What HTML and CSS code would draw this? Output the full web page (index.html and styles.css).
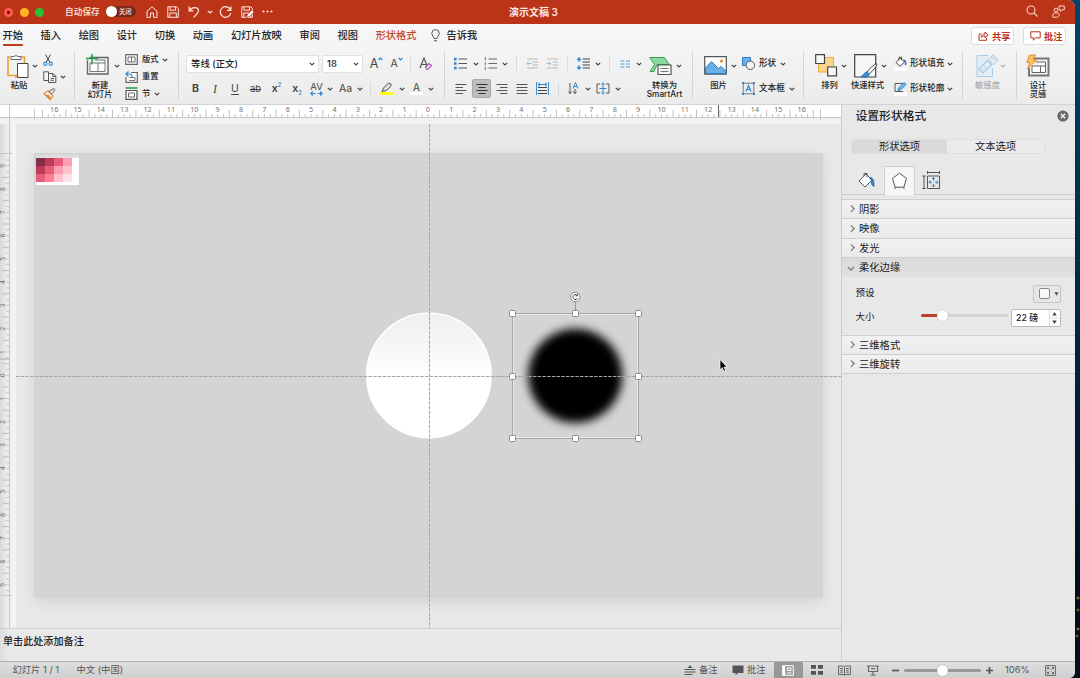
FILE: index.html
```html
<!DOCTYPE html>

<html>
	<head>
		<meta http-equiv="content-type" content="text/html; charset=utf-8" />
		<title>演示文稿 3</title>
		<link rel="stylesheet" href="styles.css">
	</head>

	<body>
		<svg class="defs">
			<symbol id="chev" viewBox="0 0 6 4"><path d="M.8.8 3 3 5.200.8" fill="none" stroke="#444" stroke-width="1.2"/></symbol>
			<symbol id="save" viewBox="0 0 12 12"><path d="M.8.8h9l1.500 1.500v9H.8zM3 .8v3.400h5.500V.8M2.800 11.200V7h6.500v4.200" fill="none" stroke="#fbe6e0"/></symbol>
		</svg>

		<div class="window">
			<div class="titlebar">
				<div class="lights">
					<i class="light red"></i><i class="light yellow"></i><i class="light green"></i>
				</div>
				<span class="autosave">自动保存</span>
				<div class="toggle"><i></i><span>关闭</span></div>
				<div class="quick">
					<svg width="12" height="12" fill="none" stroke="#fbe6e0"><path d="M1 5.300 6 .8l5 4.500v6H7.500V7h-3v4.300H1z"/></svg>
					<svg width="12" height="12"><use href="#save"/></svg>
					<svg width="12" height="12" fill="none" stroke="#fbe6e0" stroke-width="1.200"><path d="M1.200.6v4.200h4.200M1.400 4.600C4 .6 10.500.8 10.500 4.800c0 2.600-3 4-4.800 6.700"/></svg>
					<svg width="6" height="4" fill="none" stroke="#fbe6e0" stroke-width="1.200"><path d="M.8.8 3 3 5.200.8"/></svg>
					<svg width="13" height="12" fill="none" stroke="#fbe6e0" stroke-width="1.200"><path d="M11.600 4.200A5.300 5.300 0 1 0 11.800 7M11.900.5v3.900H8"/></svg>
					<svg width="13" height="12"><use href="#save" width="12"/><path d="M5.500 11.500 6.500 8.500l4.500-4.500 2 2-4.500 4.500z" fill="#fff" stroke="#bc3418" stroke-width=".6"/></svg>
					<svg width="11" height="3" fill="#fbe6e0"><circle cx="1.500" cy="1.500" r="1.100"/><circle cx="5.500" cy="1.500" r="1.100"/><circle cx="9.500" cy="1.500" r="1.100"/></svg>
				</div>
				<div class="doc-title">演示文稿 3</div>
				<div class="title-right">
					<svg width="12" height="12" fill="none" stroke="#f6d5cc" stroke-width="1.100"><circle cx="5" cy="5" r="4"/><path d="m8 8 3.500 3.500"/></svg>
					<svg width="13" height="13" fill="none" stroke="#f6d5cc"><circle cx="4" cy="5" r="1.900"/><path d="M.8 12.200V10c0-1.300.8-2 2-2h2.500c1.200 0 2 .7 2 2 0 1.500-1.500 2.200-3 2.200zM7 1h5.300v3.800H10L8.500 6.300V4.800H7z"/></svg>
				</div>
			</div>

			<div class="tabs">
				<span class="tab active">开始</span>
				<span class="tab">插入</span>
				<span class="tab">绘图</span>
				<span class="tab">设计</span>
				<span class="tab">切换</span>
				<span class="tab">动画</span>
				<span class="tab">幻灯片放映</span>
				<span class="tab">审阅</span>
				<span class="tab">视图</span>
				<span class="tab context">形状格式</span>
				<span class="tab tell">
					<svg width="9" height="13" fill="none" stroke="#555"><path d="M3 9.500C3 7.500.8 7 .8 4.300a3.700 3.700 0 0 1 7.400 0C8.200 7 6 7.500 6 9.500zM3 11.800h3"/></svg>
					告诉我
				</span>
				<div class="tab-buttons">
					<button class="outlined">
						<svg width="11" height="10" fill="none" stroke="#bc3418"><path d="M3.500 3H1v6.300h7.500V7M3 6.500c.3-2.500 2-3.400 4-3.400V1l3.200 3L7 6.800V5C5.500 5 4 5.200 3 6.500z"/></svg>
						共享
					</button>
					<button class="outlined">
						<svg width="11" height="10" fill="none" stroke="#bc3418"><path d="M.8.8h9.400v6H5.500L3.300 9.200V6.800H.8z"/></svg>
						批注
					</button>
				</div>
			</div>

			<div class="ribbon">
				<!-- Clipboard -->
				<div class="group clipboard">
					<div class="big">
						<svg width="22" height="24"><path d="M3 3H1v18.500h8V24M13 3h4.500v6" fill="none" stroke="#e8a33d" stroke-width="1.700"/><path d="M4 5.500v-3h3a2.500 2 0 0 1 4 0h3v3z" fill="#fff" stroke="#666"/><path d="M10.500 9.500h10.500v14H10.500z" fill="#fff" stroke="#444"/></svg>
						<span>粘贴</span>
					</div>
					<svg class="chev drop"><use href="#chev"/></svg>
					<div class="stack">
						<div><svg width="10" height="12" fill="none"><path d="m2.500.5 4.500 8M7.500.5 3 8.500" stroke="#444"/><circle cx="2.300" cy="9.800" r="1.600" stroke="#3a8fd0" stroke-width="1.200"/><circle cx="7.700" cy="9.800" r="1.600" stroke="#3a8fd0" stroke-width="1.200"/></svg></div>
						<div><svg width="14" height="12" fill="#f6f6f6" stroke="#555"><path d="M.8.8h4.700v8.700H.8z"/><path d="M5.500 2.500h4.500l2.800 2.800v6.200H5.500zM9.800 2.500v3h3M7.500 7.500h3.500M7.500 9.300h3.500"/></svg><svg class="chev"><use href="#chev"/></svg></div>
						<div><svg width="13" height="12"><path d="m5 3 5 5-3 3.500L1 5.500z" fill="#fff" stroke="#e08a35" stroke-width="1.200"/><path d="M3 7.500 6.500 11 8 9.500 5 6z" fill="#e08a35"/><path d="m6 3.500 2-1.500 3-1.500 1 1-2 3-1.500 1.500z" fill="#eee" stroke="#555" stroke-width=".9"/></svg></div>
					</div>
				</div>

				<!-- Slides -->
				<div class="group slides">
					<div class="big">
						<svg width="24" height="24"><path d="M3.500 3.500h18.500v16.500H1.500V6" fill="#f6f6f6" stroke="#666" stroke-width="1.400"/><path d="M4 9h15v8.500H4zM12 9v8.500M9 6h10v3" fill="#fff" stroke="#777"/><path d="M0 4.500h12M6 0v10.500" stroke="#21a04b" stroke-width="1.500"/></svg>
						<span>新建<br>幻灯片</span>
					</div>
					<svg class="chev drop"><use href="#chev"/></svg>
					<div class="stack">
						<div><svg width="13" height="11" fill="#fff" stroke="#666"><path d="M.7.7h11.600v9.600H.7z" stroke-width="1.200"/><path d="M3 3h3.500v5H3zM6.500 3H10v5H6.500z"/></svg><span>版式</span><svg class="chev"><use href="#chev"/></svg></div>
						<div><svg width="13" height="12"><path d="M6 1.500h6.300v9.800H1V6" fill="#fff" stroke="#666" stroke-width="1.200"/><path d="M4.500 6.500H10v3H4" fill="none" stroke="#777"/><path d="M3.500.5 1 3l2.500 2.500M1 3h3.500c1.800 0 2.500 1.200 2.500 3.500" fill="none" stroke="#2f86cc" stroke-width="1.100"/></svg><span>重置</span></div>
						<div><svg width="13" height="13" fill="#fff"><path d="M.5 1h12" stroke="#3fa861" stroke-width="1.800"/><path d="M1 3.500h11v8.800H1z" stroke="#555" stroke-width="1.200"/><path d="M3.500 6h6v4h-6z" stroke="#666"/></svg><span>节</span><svg class="chev"><use href="#chev"/></svg></div>
					</div>
				</div>

				<!-- Font -->
				<div class="group font">
					<div class="row row-1">
						<div class="combo">等线 (正文)<svg class="chev"><use href="#chev"/></svg></div>
						<div class="combo size">18<svg class="chev"><use href="#chev"/></svg></div>
						<span class="glyph grow">A<svg width="5" height="4"><path d="M.6 3 2.500 1 4.400 3" fill="none" stroke="#2f86cc" stroke-width="1.200"/></svg></span>
						<span class="glyph shrink">A<svg width="5" height="4"><path d="M.6 1 2.500 3 4.400 1" fill="none" stroke="#2f86cc" stroke-width="1.200"/></svg></span>
						<i class="sep"></i>
						<svg width="14" height="14" fill="none"><path d="M1 11 5 1l3 7.500M2.500 7.500h4.500" stroke="#555" stroke-width="1.200"/><path d="m6.500 10 3.500-3.500 2.500 2L9 12.300H7.500z" fill="#f3dff5" stroke="#a347b5" stroke-width="1.100"/></svg>
					</div>
					<div class="row row-2">
						<b class="glyph">B</b>
						<span class="glyph italic">I</span>
						<span class="glyph underline">U</span>
						<span class="glyph strike">ab</span>
						<span class="glyph heavy">x<sup>2</sup></span>
						<span class="glyph heavy">x<sub>2</sub></span>
						<span class="glyph spacing">AV<svg width="13" height="5" fill="none" stroke="#2f86cc" stroke-width="1.100"><path d="M2.800.5.8 2.500l2 2M.8 2.500h4.700M10.200.5l2 2-2 2M12.200 2.500H7.500"/></svg></span>
						<svg class="chev"><use href="#chev"/></svg>
						<span class="glyph case">Aa</span>
						<svg class="chev"><use href="#chev"/></svg>
						<i class="sep"></i>
						<svg width="13" height="13"><path d="m3.500 6 5-5 2.500 1-.3 2.500L6.500 8.500 2 9.500z" fill="#ddd" stroke="#555"/><path d="M0 11.500h13" stroke="#ffff18" stroke-width="3"/></svg>
						<svg class="chev"><use href="#chev"/></svg>
						<span class="glyph color">A</span>
						<svg class="chev"><use href="#chev"/></svg>
					</div>
				</div>

				<!-- Paragraph -->
				<div class="group paragraph">
					<div class="rows">
						<div class="row row-1">
							<svg width="13" height="13"><path d="M4.500 2H13M4.500 6.500H13M4.500 11H13" stroke="#555"/><path d="M0 .8h2.600v2.600H0zM0 5.200h2.600v2.600H0zM0 9.700h2.600v2.600H0z" fill="#2f86cc"/></svg>
							<svg class="chev"><use href="#chev"/></svg>
							<svg width="13" height="13"><path d="M4.500 2H13M4.500 6.500H13M4.500 11H13" stroke="#666"/><path d="M1.300 0v3.500M1.300 5v3M1.300 9.500V13" stroke="#2f86cc"/></svg>
							<svg class="chev"><use href="#chev"/></svg>
							<i class="sep"></i>
							<svg class="dim" width="12" height="11"><path d="M1 1h11M6.500 4H12M6.500 7H12M1 10h11" stroke="#777"/><path d="M5.500 5.500H.8M2.800 3.700.8 5.500l2 1.800" fill="none" stroke="#2f86cc"/></svg>
							<svg class="dim" width="12" height="11"><path d="M1 1h11M6.500 4H12M6.500 7H12M1 10h11" stroke="#777"/><path d="M.3 5.500H5M3 3.700l2 1.800-2 1.800" fill="none" stroke="#2f86cc"/></svg>
							<i class="sep"></i>
							<svg width="13" height="13"><path d="M5.500 2H13M5.500 5H13M5.500 8H13M5.500 11H13" stroke="#444"/><path d="M2 1v4M.3 3 2 1l1.700 2M2 12V8M.3 10 2 12l1.700-2" fill="none" stroke="#2f86cc" stroke-width="1.200"/></svg>
							<svg class="chev"><use href="#chev"/></svg>
							<i class="sep"></i>
							<svg width="11" height="8"><path d="M.5 1h4M.5 4h4M.5 7h4M6 1h4M6 4h4M6 7h4" stroke="#4e97cf" stroke-width="1.200"/></svg>
							<svg class="chev"><use href="#chev"/></svg>
						</div>
						<div class="row row-2">
							<svg width="12" height="12" stroke="#555"><path d="M.5 1.500h11M.5 4.500H8M.5 7.500h11M.5 10.500H8"/></svg>
							<span class="pressed"><svg width="12" height="12" stroke="#333"><path d="M.5 1.500h11M2.500 4.500h7M.5 7.500h11M2.500 10.500h7"/></svg></span>
							<svg width="12" height="12" stroke="#555"><path d="M.5 1.500h11M4 4.500h7.500M.5 7.500h11M4 10.500h7.500"/></svg>
							<svg width="12" height="12" stroke="#555"><path d="M.5 1.500h11M.5 4.500h11M.5 7.500h11M.5 10.500h11"/></svg>
							<svg width="13" height="13" fill="none"><path d="M2 5.500h9M2 8.500h9M2 11.500h9" stroke="#444"/><path d="M.6 0v13M12.400 0v13M2 2.500h9M4 .8 2 2.500l2 1.700M9 .8l2 1.700-2 1.700" stroke="#2f86cc"/></svg>
							<i class="sep"></i>
							<svg width="12" height="13" fill="none"><path d="M2 1v10.500M.3 9.500 2 11.700l1.700-2.200M7 7v4.500M5.300 9.500 7 11.700l1.700-2.200" stroke="#555"/><path d="m5 6.500 2.500-6 2.500 6M6 4.500h3" stroke="#2f86cc"/></svg>
							<svg class="chev"><use href="#chev"/></svg>
							<svg width="14" height="13" fill="none"><path d="M4 2H1v9h3M10 2h3v9h-3" stroke="#555"/><path d="M7 .8v11.400M5.300 2.500 7 .8l1.700 1.700M5.300 10.500 7 12.200l1.700-1.700M3.500 6.500h7" stroke="#2f86cc"/></svg>
							<svg class="chev"><use href="#chev"/></svg>
						</div>
					</div>
					<div class="big smartart">
						<svg width="23" height="20"><path d="M.8 1.500h14.500l5 7H8l-3 7H1l4.500-7z" fill="#8ad79d" stroke="#3c9f59"/><path d="M9 9h13v9.500H9z" fill="#f8f8f8" stroke="#555" stroke-width="1.200"/><path d="M11.500 12.500h8M11.500 15.500h8" stroke="#777"/></svg>
						<span>转换为<br>SmartArt</span>
					</div>
					<svg class="chev drop"><use href="#chev"/></svg>
				</div>

				<!-- Insert -->
				<div class="group insert">
					<div class="big">
						<svg width="23" height="19"><path d="M.7.700h21.600v17.500H.7z" fill="#fff" stroke="#555" stroke-width="1.200"/><path d="m1.500 12 6-6.500 7 7 2.500-2 5 4.500v2.500H1.500z" fill="#6ab0e8" stroke="#2a7fc6"/><circle cx="17.500" cy="5" r="1.600" fill="#e88b3a"/></svg>
						<span>图片</span>
					</div>
					<svg class="chev drop"><use href="#chev"/></svg>
					<div class="list">
						<div><svg width="13" height="13"><path d="M.5.500h8v8h-8z" fill="#6ab0e8" stroke="#2a7fc6"/><circle cx="8.300" cy="8.300" r="4.200" fill="#f6f6f6" stroke="#555"/></svg><span>形状</span><svg class="chev"><use href="#chev"/></svg></div>
						<div><svg width="13" height="13" fill="none"><path d="M1.200 1.200h10.600v10.600H1.200z" stroke="#777"/><path d="m4 9.500 2.500-6 2.500 6M5 7.500h3" stroke="#2f86cc" stroke-width="1.200"/><path d="M0 0h2v2H0zM11 0h2v2h-2zM0 11h2v2H0zM11 11h2v2h-2z" fill="#2f86cc"/></svg><span>文本框</span><svg class="chev"><use href="#chev"/></svg></div>
					</div>
				</div>

				<!-- Drawing -->
				<div class="group drawing">
					<div class="big arrange">
						<svg width="23" height="23"><path d="M3.500 3.500h15v14.500h-15z" fill="#f9d58a" stroke="#e9a947"/><path d="M.7.700h8.800v8.800H.7zM12.700 13h8.800v8.800h-8.800z" fill="#f8f8f8" stroke="#444" stroke-width="1.200"/></svg>
						<span>排列</span>
					</div>
					<svg class="chev drop"><use href="#chev"/></svg>
					<div class="big styles">
						<svg width="24" height="24"><path d="M.7.700h21v22.300H.7z" fill="#f6f6f6" stroke="#444" stroke-width="1.200"/><path d="M22.500 9.500c-3 1.500-7 5-9.500 8.500l2 2c4-3 7-7 8-10z" fill="#fff" stroke="#444"/><path d="M13 18c-3 0-3 3.500-6 4.500 3 1.500 8 1 8-2.500z" fill="#3d8ed6" stroke="#2a6fb0"/></svg>
						<span>快速样式</span>
					</div>
					<svg class="chev drop"><use href="#chev"/></svg>
					<div class="list">
						<div><svg width="13" height="15"><path d="M0 11.500h13V15H0z" fill="#fff"/><path d="m2 6.500 4.500-4.500L10.500 6 6 10.300zM5 4V1.300h2.500V4" fill="#fff" stroke="#444"/><path d="M9.500 4c2 .5 2.500 2 2 5" fill="none" stroke="#2a6fc0" stroke-width="1.600"/></svg><span>形状填充</span><svg class="chev"><use href="#chev"/></svg></div>
						<div><svg width="13" height="15"><path d="M0 11.500h13V15H0z" fill="#fff"/><path d="M9 2.500H1v8h8" fill="none" stroke="#555"/><path d="m4 9.500 1-3L10 1.500l2 2L7 8.500z" fill="#79b8ea" stroke="#2a7fc6"/></svg><span>形状轮廓</span><svg class="chev"><use href="#chev"/></svg></div>
					</div>
				</div>

				<!-- Sensitivity -->
				<div class="group sensitivity">
					<div class="big">
						<svg width="23" height="24" fill="#e3edf5" stroke="#a9cbe6"><path d="M12 1.500H1v21h15.500V14"/><path d="m3 15 8.500-8.500 4 4L7 19z" stroke-width="1.300"/><path d="m12.500 6 3.500-3.500 5 5-3.500 3.500zM15 3l2-2.300 5 5-1.500 1.500M5.500 14.500l2 2M8 12l2 2" /></svg>
						<span>敏感度</span>
					</div>
					<svg class="chev drop"><use href="#chev"/></svg>
				</div>

				<!-- Design ideas -->
				<div class="group ideas">
					<div class="big">
						<svg width="24" height="24"><path d="M6 4.500h16.500v17H3V14" fill="#f4f4f4" stroke="#777" stroke-width="2"/><path d="M10 8h9.500v10.500H6V12h13.500M14.500 12v6.500" fill="#fff" stroke="#666"/><path d="M3.500 1h6L7 6h3.500L1.500 15l2.200-6.500H.8z" fill="#fbc35e" stroke="#e8883a"/></svg>
						<span>设计<br>灵感</span>
					</div>
				</div>
			</div>

			<div class="main">
				<div class="editor">
					<svg class="ruler-h" id="rulerH" width="841" height="19"></svg>
					<div class="work">
						<svg class="ruler-v" id="rulerV" width="16" height="504"></svg>
						<div class="canvas">
							<div class="slide">
								<div class="palette">
									<i class="c1"></i><i class="c2"></i><i class="c3"></i><i class="c4"></i>
									<i class="c2"></i><i class="c3"></i><i class="c4"></i><i class="c6"></i>
									<i class="c3"></i><i class="c5"></i><i class="c6"></i><i class="c7"></i>
								</div>
							</div>
							<!-- shapes, guides and the selection frame -->
							<svg class="shapes" viewBox="16 124 825 504" width="825" height="504">
								<defs>
									<linearGradient id="face" x1="0" y1="0" x2="0" y2="1">
										<stop offset="0" stop-color="#efefef"/>
										<stop offset=".55" stop-color="#fff"/>
									</linearGradient>
									<filter id="soft" x="-30%" y="-30%" width="160%" height="160%"><feGaussianBlur stdDeviation="4.8"/></filter>
								</defs>
								<circle cx="428.900" cy="375.500" r="62.200" fill="url(#face)" stroke="#fff" stroke-width="1.600"/>
								<circle cx="575.300" cy="375.800" r="47" filter="url(#soft)"/>
								<path d="M16 376.500H841M429.500 124V628" stroke="#a6a6a6" stroke-dasharray="3.500 1.200"/>
								<path d="M575.500 302v11" stroke="#999"/>
								<path d="M513.500 314.500h124v123h-124z" fill="none" stroke="#ececec"/>
								<path d="M512.500 313.500h126v125h-126z" fill="none" stroke="#a5a5a5"/>
								<g id="handles" fill="#fff" stroke="#8b8b8b"></g>
								<circle cx="575.300" cy="297" r="4.700" fill="#fff" stroke="#8b8b8b"/>
								<path d="M577.600 298a2.500 2.500 0 1 1-.6-2.800M577.500 293.800v2h-2" fill="none" stroke="#555"/>
								<path d="m720 359.500v10.200l2.300-2 1.500 3.500 1.700-.7-1.500-3.400h3z" fill="#000" stroke="#fff" stroke-width=".7"/>
							</svg>
						</div>
					</div>
					<div class="notes">单击此处添加备注</div>
				</div>

				<div class="pane">
					<div class="pane-head">
						<span>设置形状格式</span>
						<svg width="12" height="12"><circle cx="6" cy="6" r="5.600" fill="#666"/><path d="m3.800 3.800 4.400 4.400M8.200 3.800 3.800 8.200" stroke="#eee" stroke-width="1.500"/></svg>
					</div>
					<div class="segmented"><span class="on">形状选项</span><span>文本选项</span></div>
					<div class="pane-tabs">
						<div><svg width="18" height="17"><path d="m1 9 7-7 6 6-7 7zM6 4V1.500h3V5" fill="#fff" stroke="#555"/><path d="M11.500 5.500c3.500 0 4.500 2.500 4.500 9-2-1-3-3-2.500-6z" fill="#2f86cc" stroke="#2a6fc0"/></svg></div>
						<div class="on"><svg width="17" height="17" fill="#fff" stroke="#555"><path d="m8.500 1.200 7 5.200-2.700 8.800H4.200L1.500 6.400zM4 15.500v1.500M13 15.500v1.500"/></svg></div>
						<div><svg width="18" height="18" fill="none"><path d="M2 5v12.500M.3 5h3.400M.3 17.500h3.400M5.500 1.500h12M5.500 0v3M17.500 0v3M5.500 5h12v12.500h-12z" stroke="#555"/><path d="M11.500 6.500v3.200M10 8l1.500-1.500L13 8M11.500 16v-3.200M10 14.500l1.500 1.500 1.500-1.500M7 11.200h3M8.300 9.700 7 11.200l1.300 1.500M16 11.200h-3M14.700 9.700l1.300 1.500-1.300 1.500" stroke="#2f86cc"/></svg></div>
					</div>
					<div class="section"><i class="arrow"></i>阴影</div>
					<div class="section"><i class="arrow"></i>映像</div>
					<div class="section"><i class="arrow"></i>发光</div>
					<div class="section open"><i class="arrow"></i>柔化边缘</div>
					<div class="soft-edges">
						<div class="field">
							<span>预设</span>
							<div class="preset"><i></i><svg width="5" height="4"><path d="M.3.300h4.400L2.500 3.700z" fill="#555"/></svg></div>
						</div>
						<div class="field">
							<span>大小</span>
							<div class="slider"><i class="filled"></i><i class="knob"></i></div>
							<div class="stepper">22 磅<svg width="11" height="16"><path d="M.5 0v16M.5 8H11" stroke="#ddd"/><path d="M3.300 5.500h4.400L5.500 2zM3.300 10.500h4.400L5.500 14z" fill="#444"/></svg></div>
						</div>
					</div>
					<div class="section"><i class="arrow"></i>三维格式</div>
					<div class="section last"><i class="arrow"></i>三维旋转</div>
				</div>
			</div>

			<div class="status">
				<span class="page">幻灯片 1 / 1</span>
				<span class="lang">中文 (中国)</span>
				<div class="views">
					<div class="label"><svg width="12" height="11"><path d="M.5 4.500h11M.5 7h11M.5 9.500h8" stroke="#555"/><path d="M3.500 3h5L6 .2z" fill="#555"/></svg>备注</div>
					<div class="label"><svg width="12" height="11"><path d="M.5.500h11v7.500H6L3.500 10.500V8h-3z" fill="#555"/></svg>批注</div>
					<div class="on"><svg width="12" height="11" fill="none" stroke="#fff"><path d="M.7.700h10.600v9.600H.7z"/><path d="M2 .7v9.600" stroke-width="2.400"/><path d="M5.500 3h3.500v2.500H5.500zM5 8h4.500"/></svg></div>
					<div><svg width="12" height="10" fill="#555"><path d="M0 0h5v3.800H0zM7 0h5v3.800H7zM0 6h5v3.800H0zM7 6h5v3.800H7z"/></svg></div>
					<div><svg width="13" height="11" fill="none" stroke="#666"><path d="M.6 1h4.900l1 .8 1-.8h4.900v8.500H7.500l-1 .8-1-.8H.6zM6.500 2v8M2.300 3.500H5M2.300 5.300H5M2.300 7.200H5M8 3.500h2.700M8 5.300h2.700M8 7.200h2.700"/></svg></div>
					<div><svg width="12" height="11" fill="none" stroke="#666"><path d="M0 1h12M1.500 1v5.500h9V1M6 6.500v3M3.500 10h5M4 3.700h4" stroke-width="1.200"/></svg></div>
					<div class="zoom">
						<svg width="7" height="7"><path d="M0 3.500h7" stroke="#555" stroke-width="1.700"/></svg>
						<div class="track"><i class="knob"></i></div>
						<svg width="7" height="7"><path d="M0 3.500h7M3.500 0v7" stroke="#555" stroke-width="1.700"/></svg>
					</div>
					<span class="percent">106%</span>
					<svg width="11" height="11" fill="none" stroke="#666"><path d="M.6.600h9.800v9.800H.6z"/><path d="m2.500 2.500 2 2M8.500 2.500l-2 2M2.500 8.500l2-2M8.500 8.500l-2-2M2.500 4V2.500H4M7 2.500h1.500V4M2.500 7v1.500H4M7 8.500h1.500V7"/></svg>
				</div>
			</div>
		</div>

		<script>
			var NS = 'http://www.w3.org/2000/svg';

			function add(parent, name, attrs, text)
			{
				var el = document.createElementNS(NS, name);
				for(var key in attrs)
					el.setAttribute(key, attrs[key]);
				if(text !== undefined)
					el.textContent = text;
				parent.appendChild(el);
			}

			function horizontal()
			{
				var svg = document.getElementById('rulerH');
				var step = 23.36;
				var d = '';
				for(var i = -66; i <= 66; i++)
				{
					var x = 427.9 + i * step / 4;
					d += 'M' + x.toFixed(1) + ' ' + (i % 4 == 2 || i % 4 == -2 ? 5 : 9) + 'V12';
				}
				add(svg, 'path', {d: d, 'class': 'tick'});
				add(svg, 'path', {d: 'M34.5 4V15M820.5 4V15M0 12.5H841M9.500 0V19', 'class': 'edge'});
				add(svg, 'path', {d: 'M718.500 0V12', 'class': 'mark'});
				for(var n = -16; n <= 16; n++)
					add(svg, 'text', {x: 427.9 + n * step, y: 7}, Math.abs(n));
			}

			function vertical()
			{
				var svg = document.getElementById('rulerV');
				var step = 23.28;
				var d = '';
				for(var i = -37; i <= 37; i++)
				{
					var y = 251.3 + i * step / 4;
					d += 'M' + (i % 4 == 2 || i % 4 == -2 ? 2.5 : 6.5) + ' ' + y.toFixed(1) + 'H9.5';
				}
				add(svg, 'path', {d: d, 'class': 'tick'});
				add(svg, 'path', {d: 'M0 29.500H12M0 471.500H12M9.500 0V504', 'class': 'edge'});
				add(svg, 'path', {d: 'M0 235H9', 'class': 'mark'});
				for(var n = -9; n <= 9; n++)
				{
					var c = 251.3 + n * step;
					add(svg, 'text', {x: 5, y: c, transform: 'rotate(-90 5 ' + c + ')'}, Math.abs(n));
				}
			}

			function handles()
			{
				var g = document.getElementById('handles');
				[[512.5, 313.5], [575.5, 313.5], [638.5, 313.5], [512.5, 376.5], [638.5, 376.5], [512.5, 438.5], [575.5, 438.5], [638.5, 438.5]].forEach(function(p)
				{
					add(g, 'rect', {x: p[0] - 3, y: p[1] - 3, width: 6, height: 6, rx: 1});
				});
			}

			horizontal();
			vertical();
			handles();
		</script>
	</body>
</html>
```
FILE: styles.css
```css
* {
	box-sizing: border-box;
}
body {
	margin: 0;
	width: 1080px;
	height: 678px;
	overflow: hidden;
	font-family: Inter, "Noto Sans CJK SC", sans-serif;
	color: #222;
	background: radial-gradient(circle, #8a6a30 1px, transparent 1.8px) 1076px 594px / 4px 8px no-repeat,
		radial-gradient(circle, #6d5630 1px, transparent 1.8px) 1076px 606px / 4px 8px no-repeat,
		radial-gradient(circle, #8a6a30 1px, transparent 1.8px) 1076px 625px / 4px 8px no-repeat,
		radial-gradient(circle, #6d5630 1px, transparent 1.8px) 1075px 632px / 4px 8px no-repeat,
		linear-gradient(#034468, #00304c 30%, #001f36 60%, #030d1a 88%, #04101e);
}
svg {
	display: block;
	flex: none;
	overflow: visible;
}
i {
	display: block;
	flex: none;
}
.defs {
	position: absolute;
	width: 0;
	height: 0;
}
.chev {
	width: 6px;
	height: 4px;
}
.window {
	display: flex;
	flex-direction: column;
	width: 1075px;
	height: 678px;
	border-radius: 0 7px 6px 0;
	overflow: hidden;
	background: #f2f2f2;
}

/* title bar */
.titlebar {
	display: flex;
	align-items: center;
	height: 24px;
	padding-left: 4px;
	background: #bc3418;
	color: #fbe6e0;
	font-weight: 500;
}
.lights {
	display: flex;
	gap: 6.5px;
	width: 61px;
}
.light {
	width: 9px;
	height: 9px;
	border-radius: 50%;
}
.light.red {
	background: radial-gradient(circle, #5c0b05 1.2px, #ff5a50 1.8px);
}
.light.yellow {
	background: #fdb627;
}
.light.green {
	background: #24c138;
}
.autosave {
	width: 41px;
	margin-top: -2px;
	font-size: 8.7px;
	white-space: nowrap;
}
.toggle {
	display: flex;
	align-items: center;
	width: 30px;
	height: 11px;
	margin-top: -1px;
	border-radius: 6px;
	background: #79281a;
	font-size: 6.3px;
}
.toggle i {
	width: 11px;
	height: 11px;
	margin-right: 2px;
	border-radius: 50%;
	background: #fff;
}
.quick {
	display: grid;
	grid-template-columns: 21px 21px 22px 9px 23px 20px 20px;
	align-items: center;
	justify-items: center;
	margin: -1px 0 0 5px;
}
.doc-title {
	width: 60px;
	margin: -1px 0 0 232px;
	font-size: 10px;
	font-weight: 600;
	white-space: nowrap;
}
.title-right {
	display: flex;
	gap: 14px;
	margin: -1px 0 0 auto;
	padding-right: 10px;
}

/* tab strip */
.tabs {
	display: flex;
	gap: 17.7px;
	height: 26px;
	padding: 3px 9px 0 2.5px;
	background: linear-gradient(#f7f7f7, #f4f4f4);
	font-size: 10.2px;
	font-weight: 500;
	line-height: 17px;
	white-space: nowrap;
}
.tab {
	height: 19px;
}
.tab.active {
	border-bottom: 2px solid #c03a1c;
	border-radius: 1px;
}
.tab.context {
	color: #c8452b;
}
.tab.tell {
	display: flex;
	align-items: center;
	gap: 6.5px;
	height: 17px;
	margin-left: -3px;
}
.tab-buttons {
	display: flex;
	gap: 9px;
	margin-left: auto;
}
.outlined {
	display: flex;
	align-items: center;
	gap: 3.5px;
	width: 43px;
	height: 18px;
	padding: 0 0 0 5.5px;
	border: 1px solid #ddd;
	border-radius: 3px;
	background: #fff;
	color: #bc3418;
	font: 700 9.3px Inter, "Noto Sans CJK SC", sans-serif;
}

/* ribbon */
.ribbon {
	display: flex;
	height: 55px;
	background: linear-gradient(#f4f4f4, #ebebeb);
	border-bottom: 1px solid #d2d2d2;
	font-size: 8.3px;
	font-weight: 500;
	line-height: 9.6px;
	white-space: nowrap;
}
.group {
	display: flex;
	height: 48px;
	margin-top: 1px;
	border-right: 1px solid #d5d5d5;
}
.big {
	display: flex;
	flex-direction: column;
	align-items: center;
	justify-content: space-between;
	width: 26px;
	height: 50px;
	text-align: center;
}
.big span {
	height: 21px;
	padding-top: 0.5px;
}
.big > svg {
	margin: auto 0;
}
.drop {
	margin-top: 12.5px;
}
.stack > div {
	display: flex;
	align-items: center;
	height: 17px;
}
.clipboard {
	width: 75px;
	padding-left: 6px;
}
.clipboard .big > svg {
	margin-left: -3px;
}
.clipboard .drop {
	margin-right: 5px;
}
.clipboard .stack svg:first-child {
	width: 14px;
	margin-right: 2.5px;
}
.slides {
	width: 104px;
	padding-left: 11px;
}
.slides .big > svg {
	margin-left: -4px;
}
.slides .big {
	width: 28px;
}
.slides .drop {
	margin: 12.5px 5px 0 0;
}
.slides .stack span {
	margin: 0 3.5px 0 4px;
}
.row {
	display: grid;
	align-items: center;
	justify-items: center;
	height: 19px;
}
.row-2 {
	margin-top: 6px;
}
.sep {
	width: 1px;
	height: 14px;
	background: #d8d8d8;
}
.font {
	flex-direction: column;
	width: 266px;
	padding: 3px 0 0 7px;
}
.font .row-1 {
	grid-template-columns: 133px 44px 22px 18px 14px 18px;
}
.font .row-2 {
	grid-template-columns: 19px 20px 20px 21px 21px 20px 19px 8px 23px 6px 15px 17px 13px 17px 12px;
}
.combo {
	display: flex;
	align-items: center;
	justify-content: space-between;
	width: 133px;
	height: 18px;
	padding: 0 3px 0 4px;
	border: 1px solid #e0e0e0;
	border-radius: 2px;
	background: #fff;
	font-size: 9.4px;
}
.combo.size {
	width: 41px;
	justify-self: end;
}
.glyph {
	position: relative;
	font-size: 10.5px;
	line-height: 12px;
	color: #444;
	text-align: center;
}
b.glyph {
	font-weight: 700;
}
.grow {
	font-size: 12.5px;
	font-weight: 400;
}
.shrink {
	font-size: 10.5px;
	font-weight: 400;
}
.grow svg,
.shrink svg {
	position: absolute;
	top: -1px;
	right: -5px;
}
.italic {
	font-family: "Liberation Serif", serif;
	font-style: italic;
	font-size: 12px;
}
.underline {
	font-weight: 400;
	text-decoration: underline;
	text-underline-offset: 2px;
}
.strike {
	font-size: 9.5px;
	font-weight: 400;
	text-decoration: line-through;
}
.heavy {
	font-weight: 600;
}
.heavy sup,
.heavy sub {
	font-size: 5.5px;
	line-height: 0;
	color: #2f86cc;
}
.heavy sup {
	vertical-align: 5px;
}
.heavy sub {
	vertical-align: -3px;
}
.spacing {
	font-size: 9.5px;
	font-weight: 400;
	line-height: 9px;
}
.case {
	font-weight: 400;
}
.color {
	width: 13px;
	height: 13px;
	border-bottom: 3px solid #fff;
	font-size: 10px;
	font-weight: 400;
	line-height: 10px;
}
.paragraph {
	width: 248px;
	padding-left: 5.5px;
}
.rows {
	width: 195px;
	padding-top: 3px;
}
.paragraph .row-1 {
	grid-template-columns: 20px 10px 20px 8px 15px 17px 23px 8px 23px 7px 15px 17px 11px;
}
.paragraph .row-2 {
	grid-template-columns: 21px 20px 20px 20px 21px 11px 20px 8px 22px 8px;
}
.dim {
	opacity: 0.45;
}
.pressed {
	display: flex;
	align-items: center;
	justify-content: center;
	width: 19px;
	height: 19px;
	border: 1px solid #aaa;
	border-radius: 2px;
	background: #bdbdbd;
}
.big.smartart {
	width: 38px;
}
.smartart > svg {
	margin-left: -8px;
}
.smartart + .drop {
	margin-left: -8px;
}
.insert {
	width: 111px;
	padding-left: 13px;
}
.insert .big {
	width: 25px;
}
.insert .big > svg {
	margin-left: -6px;
}
.list {
	padding-top: 3px;
	font-size: 8.6px;
}
.list > div {
	display: flex;
	align-items: center;
	gap: 4px;
	height: 19px;
}
.list > div + div {
	margin-top: 6px;
}
.insert .list {
	margin-left: 5px;
}
.drawing {
	width: 159px;
	padding-left: 10px;
}
.drawing .drop {
	width: 6px;
}
.arrange > svg {
	margin-left: -2px;
}
.arrange span {
	padding-left: 5px;
}
.drawing .big + .drop {
	margin-left: 1px;
}
.drawing .styles {
	width: 34px;
	margin-left: 3.5px;
}
.styles > svg {
	margin-left: -4px;
}
.drawing .styles + .drop {
	margin-left: -3.5px;
}
.drawing .list {
	margin-left: 7px;
}
.drawing .list > div {
	gap: 3px;
}
.sensitivity {
	width: 54px;
	padding-left: 12px;
	color: #aaa;
}
.sensitivity .drop {
	opacity: 0.35;
}
.sensitivity .big {
	width: 25px;
}
.ideas {
	padding-left: 8px;
	border-right: 0;
}

/* editor */
.main {
	display: flex;
	height: 556px;
}
.editor {
	width: 841px;
	background: linear-gradient(90deg, #d9d9d9, #efefef 8px, #f3f3f3 14px);
}
.ruler-h {
	background: linear-gradient(#fff 12px, #f2f2f2 12px);
}
.tick {
	fill: none;
	stroke: #b2b2b2;
	stroke-width: 0.8;
}
.edge {
	fill: none;
	stroke: #c6c6c6;
}
.mark {
	stroke: #666;
}
.ruler-v .mark {
	stroke: #aaa;
}
.ruler-h text,
.ruler-v text {
	font: 7.2px "Noto Sans", sans-serif;
	fill: #707070;
	text-anchor: middle;
}
.ruler-v text {
	font-size: 6.5px;
}
.work {
	display: flex;
	height: 504px;
}
.canvas {
	position: relative;
	width: 825px;
	padding: 29px 18px 0;
	background: #e8e8e8;
}
.slide {
	width: 789px;
	height: 445px;
	padding: 2px;
	background: #d4d4d4;
	box-shadow: 0 4px 12px rgba(0, 0, 0, 0.09);
}
.palette {
	display: grid;
	grid-template-columns: repeat(4, 9px);
	grid-auto-rows: 8px;
	width: 43px;
	height: 30px;
	border-top: 3px solid #dedede;
	background: #fff;
}
.c1 { background: #872c45; }
.c2 { background: #be3b57; }
.c3 { background: #e85d79; }
.c4 { background: #fd9db1; }
.c5 { background: #ff7f99; }
.c6 { background: #fec0cd; }
.c7 { background: #fde0e5; }
.shapes {
	position: absolute;
	left: 0;
	top: 0;
}
.notes {
	height: 33px;
	padding: 3.5px 3px;
	border-top: 1px solid #cfcfcf;
	background: linear-gradient(90deg, #dedede, #e9e9e9 10px);
	font: 500 10.1px/15px "Noto Sans CJK SC", sans-serif;
}

/* format pane */
.pane {
	width: 234px;
	border-left: 1px solid #cdcdcd;
	background: #e8e8e8;
	font-size: 10.3px;
	white-space: nowrap;
}
.pane-head {
	display: flex;
	align-items: center;
	justify-content: space-between;
	height: 22px;
	padding: 0 6px 0 13.5px;
	font-size: 11.8px;
	font-weight: 500;
}
.pane-head span {
	margin-top: -3px;
}
.segmented {
	display: flex;
	width: 194px;
	height: 15px;
	margin: 11.5px 0 0 9px;
	border: 1px solid #dedede;
	border-radius: 4px;
	background: #ebebeb;
	overflow: hidden;
}
.segmented span {
	width: 97px;
	line-height: 12px;
	text-align: center;
}
.segmented .on {
	width: 95px;
	background: #dadada;
}
.pane-tabs {
	display: flex;
	align-items: flex-end;
	height: 41px;
	padding-left: 8.5px;
	border-bottom: 1px solid #cfcfcf;
}
.pane-tabs div {
	display: flex;
	align-items: center;
	justify-content: center;
	width: 33px;
	height: 27px;
}
.pane-tabs .on {
	width: 31px;
	height: 29px;
	margin-bottom: -1px;
	border: 1px solid #cfcfcf;
	border-bottom: 0;
	border-radius: 2px 2px 0 0;
	background: #f6f6f6;
}
.pane-tabs + .section {
	margin-top: 4px;
}
.section {
	display: flex;
	align-items: center;
	height: 19.5px;
	padding: 0 0 1.5px 7px;
	border-top: 1px solid #cfcfcf;
	background: linear-gradient(#f1f1f1, #ebebeb);
}
.section.open {
	background: linear-gradient(#dadada, #e0e0e0);
}
.section.last {
	border-bottom: 1px solid #cfcfcf;
}
.arrow {
	width: 4.5px;
	height: 4.5px;
	margin: 1px 5.5px 0 0;
	border: solid #666;
	border-width: 1px 1px 0 0;
	transform: rotate(45deg);
}
.open .arrow {
	transform: rotate(135deg);
}
.soft-edges {
	height: 58px;
	padding: 5px 14px 0 13.5px;
	font-size: 9.5px;
}
.field {
	display: flex;
	align-items: center;
	height: 24px;
}
.field > span {
	width: 65px;
	margin-top: -3px;
}
.preset {
	display: flex;
	align-items: center;
	gap: 4px;
	width: 28px;
	height: 18px;
	margin-left: auto;
	padding-left: 5px;
	border: 1px solid #c6c6c6;
	border-radius: 2px;
	background: #e6e6e6;
}
.preset i {
	width: 11px;
	height: 11px;
	border: 1px solid #888;
	border-radius: 2px;
	background: #f8f8f8;
}
.slider {
	display: flex;
	align-items: center;
	width: 87px;
	height: 3px;
	margin-top: -4px;
	border-radius: 2px;
	background: #d4d4d4;
}
.filled {
	width: 18px;
	height: 3px;
	border-radius: 2px;
	background: #ba4327;
}
.knob {
	width: 11px;
	height: 11px;
	border-radius: 50%;
	background: #fff;
	box-shadow: 0 0 1px rgba(0, 0, 0, 0.4);
}
.slider .knob {
	margin-left: -2px;
}
.stepper {
	display: flex;
	align-items: center;
	justify-content: space-between;
	width: 50px;
	height: 18px;
	margin: 0 0 0 auto;
	padding-left: 4px;
	border: 1px solid #bbb;
	border-radius: 2px;
	background: #fff;
	font-size: 8.8px;
	font-weight: 500;
}

/* status bar */
.status {
	display: flex;
	align-items: center;
	height: 17px;
	padding: 0 19px 0 12.5px;
	border-top: 1px solid #b3b3b3;
	background: linear-gradient(#dedede, #d0d0d0);
	font-size: 9.3px;
	line-height: 16px;
	color: #555;
	white-space: nowrap;
}
.page {
	width: 64px;
}
.views {
	display: flex;
	align-items: center;
	margin-left: auto;
}
.views > div {
	display: flex;
	align-items: center;
	justify-content: center;
	width: 28px;
	height: 16px;
}
.views > .label {
	gap: 2.5px;
	width: 34px;
	margin-right: 14px;
}
.views > .label + .label {
	margin-right: 7.5px;
}
.views > .on {
	width: 29px;
	background: #999;
}
.views > .zoom {
	gap: 5px;
	width: 101px;
	margin-left: 5px;
}
.track {
	display: flex;
	align-items: center;
	justify-content: center;
	width: 77px;
	height: 3px;
	border-radius: 2px;
	background: #999;
}
.percent {
	width: 40px;
	margin-left: 12.5px;
}
```
